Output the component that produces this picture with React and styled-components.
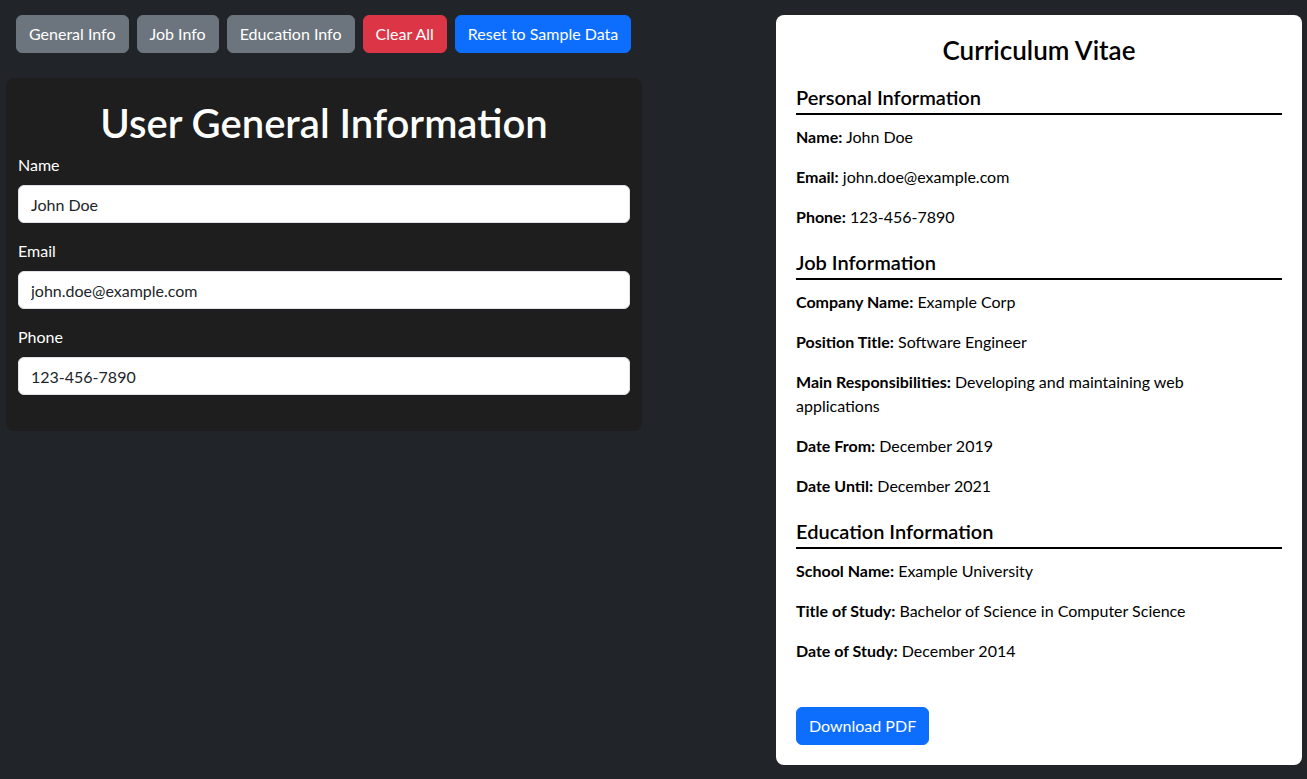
import styled, { createGlobalStyle } from 'styled-components';

const GlobalStyle = createGlobalStyle`
    * {
        box-sizing: border-box;
    }

    body {
        margin: 0;
        background: #212529;
        font-family: 'Lato', 'Noto Sans', sans-serif;
        font-size: 16px;
        line-height: 1.5;
        color: #dee2e6;
    }
`

const Page = styled.div`
    display: flex;
    justify-content: space-between;
    align-items: flex-start;
    padding: 15px 5px 14px 6px;
    min-height: 779px;
`

const EditorColumn = styled.div`
    width: 636px;
    display: flex;
    flex-direction: column;
    gap: 25px;
`

const Toolbar = styled.div`
    display: flex;
    gap: 8px;
    padding-left: 10px;
`

const BUTTON_COLORS = {
    secondary: '#6c757d',
    danger: '#dc3545',
    primary: '#0d6efd',
}

const Button = styled.button`
    flex-shrink: 0;
    white-space: nowrap;
    font-family: inherit;
    font-size: 16px;
    line-height: 24px;
    padding: 6px 12px;
    border: 1px solid ${({ $variant }) => BUTTON_COLORS[$variant]};
    border-radius: 6px;
    background: ${({ $variant }) => BUTTON_COLORS[$variant]};
    color: #fff;
    cursor: pointer;
`

const FormPanel = styled.div`
    background: #1e1e1e;
    border-radius: 8px;
    padding: 19px 12px 20px 12px;
`

const FormTitle = styled.h1`
    margin: 2px 0 6px 0;
    font-size: 40px;
    line-height: 48px;
    font-weight: 600;
    text-align: center;
    color: #fff;
`

const Field = styled.div`
    display: flex;
    flex-direction: column;
    margin-bottom: 16px;
`

const Label = styled.label`
    margin-bottom: 8px;
    color: #fff;
`

const Input = styled.input`
    height: 38px;
    padding: 6px 12px;
    font-family: inherit;
    font-size: 16px;
    color: #212529;
    background: #fff;
    border: 1px solid #dee2e6;
    border-radius: 6px;
    outline: none;
`

const CvCard = styled.div`
    width: 526px;
    display: flex;
    flex-direction: column;
    background: #fff;
    border-radius: 8px;
    padding: 20px;
    color: #000;
`

const CvTitle = styled.h3`
    margin: 0 0 14px 0;
    font-size: 26px;
    line-height: 31px;
    font-weight: 600;
    text-align: center;
`

const SectionTitle = styled.h5`
    margin: 5px 0 10px 0;
    padding-bottom: 4px;
    border-bottom: 2px solid #000;
    font-size: 20px;
    line-height: 24px;
    font-weight: 600;
`

const Entry = styled.p`
    margin: 0 0 16px 0;
    max-width: 470px;
    line-height: 24px;

    strong {
        font-weight: 700;
    }
`

const DownloadRow = styled.div`
    display: flex;
    padding-top: 28px;
`

const personal = [
    ['Name', 'John Doe'],
    ['Email', 'john.doe@example.com'],
    ['Phone', '123-456-7890'],
]

const job = [
    ['Company Name', 'Example Corp'],
    ['Position Title', 'Software Engineer'],
    ['Main Responsibilities', 'Developing and maintaining web applications'],
    ['Date From', 'December 2019'],
    ['Date Until', 'December 2021'],
]

const education = [
    ['School Name', 'Example University'],
    ['Title of Study', 'Bachelor of Science in Computer Science'],
    ['Date of Study', 'December 2014'],
]

const Section = ({ title, rows }) => (
    <>
        <SectionTitle>{title}</SectionTitle>
        {rows.map(([label, value]) => (
            <Entry key={label}><strong>{label}:</strong> {value}</Entry>
        ))}
    </>
)

const App = () => {
    return (
        <>
            <GlobalStyle />
            <Page>
                <EditorColumn>
                    <Toolbar>
                        <Button $variant="secondary">General Info</Button>
                        <Button $variant="secondary">Job Info</Button>
                        <Button $variant="secondary">Education Info</Button>
                        <Button $variant="danger">Clear All</Button>
                        <Button $variant="primary">Reset to Sample Data</Button>
                    </Toolbar>
                    <FormPanel>
                        <FormTitle>User General Information</FormTitle>
                        <Field>
                            <Label htmlFor="name">Name</Label>
                            <Input id="name" defaultValue="John Doe" />
                        </Field>
                        <Field>
                            <Label htmlFor="email">Email</Label>
                            <Input id="email" defaultValue="john.doe@example.com" />
                        </Field>
                        <Field>
                            <Label htmlFor="phone">Phone</Label>
                            <Input id="phone" defaultValue="123-456-7890" />
                        </Field>
                    </FormPanel>
                </EditorColumn>
                <CvCard>
                    <CvTitle>Curriculum Vitae</CvTitle>
                    <Section title="Personal Information" rows={personal} />
                    <Section title="Job Information" rows={job} />
                    <Section title="Education Information" rows={education} />
                    <DownloadRow>
                        <Button $variant="primary">Download PDF</Button>
                    </DownloadRow>
                </CvCard>
            </Page>
        </>
    )
}

export default App;
